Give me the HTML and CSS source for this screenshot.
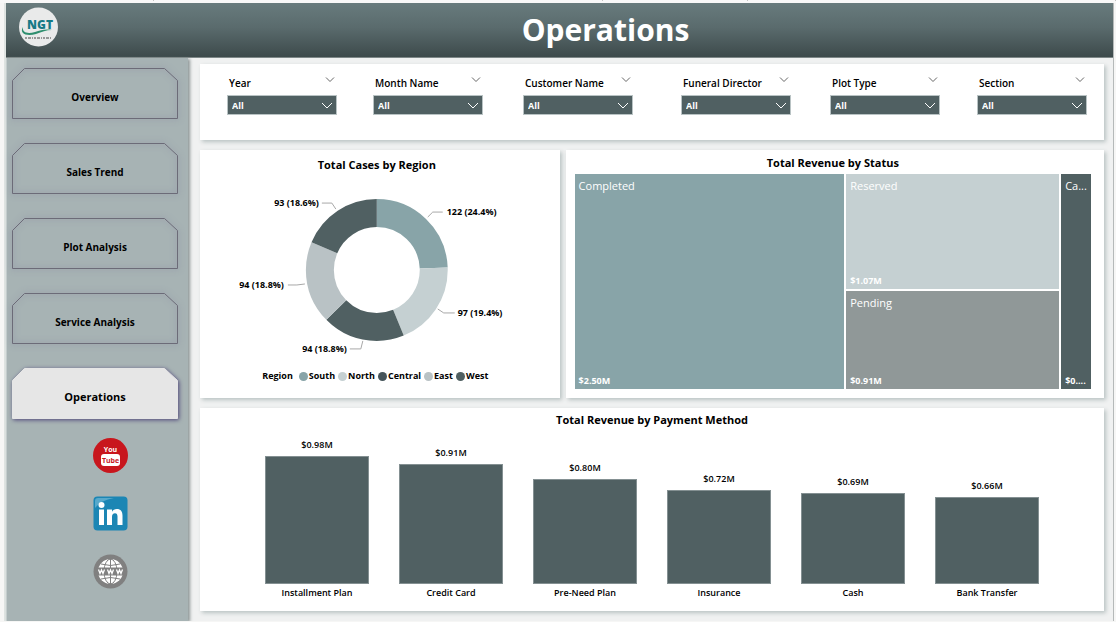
FILE: index.html
```html
<!DOCTYPE html>
<html lang="en">
<head>
    <meta charset="UTF-8">
    <meta name="viewport" content="width=device-width, initial-scale=1.0">
    <title>Operations</title>
    <link rel="stylesheet" href="styles.css">
</head>
<body>
<div class="top-strip"><span></span><span></span><span></span><span></span></div>
<div class="report">
    <header class="header">
        <svg class="logo" viewBox="0 0 40 40" role="img" aria-label="NGT">
            <circle cx="20.500" cy="20" r="19.500" fill="#e9eaea"/>
            <path d="M5 20c-4 6 3 10 13 7 6-2 10-4 16-4-7-1-11 0-17 2-7 2-13 1-12-5z" fill="#2f8f6f"/>
            <text class="logo-name" x="22" y="22">NGT</text>
            <path d="M7 31h27" stroke="#444" stroke-width="1" stroke-dasharray="2 1 3 1 1 1"/>
        </svg>
        <h1>Operations</h1>
    </header>

    <div class="body">
        <aside class="sidebar">
            <nav class="nav">
                <a href="#"><svg viewBox="0 0 166 52"><path d="M.5 12.500 12.500.5h140l13 12v38H.5z"/></svg><span>Overview</span></a>
                <a href="#"><svg viewBox="0 0 166 52"><path d="M.5 12.500 12.500.5h140l13 12v38H.5z"/></svg><span>Sales Trend</span></a>
                <a href="#"><svg viewBox="0 0 166 52"><path d="M.5 12.500 12.500.5h140l13 12v38H.5z"/></svg><span>Plot Analysis</span></a>
                <a href="#"><svg viewBox="0 0 166 52"><path d="M.5 12.500 12.500.5h140l13 12v38H.5z"/></svg><span>Service Analysis</span></a>
                <a href="#" class="active"><svg viewBox="0 0 166 52"><path d="M.5 12.500 12.500.5h140l13 12v38H.5z"/></svg><span>Operations</span></a>
            </nav>
            <div class="social">
                <a href="#" aria-label="YouTube">
                    <svg viewBox="0 0 35 35">
                        <circle cx="17.500" cy="17.500" r="17.500" fill="#c8161d"/>
                        <rect x="8" y="16" width="19" height="12" rx="3" fill="#fff"/>
                        <text class="yt" x="17.500" y="14" fill="#fff">You</text>
                        <text class="yt" x="17.500" y="25" fill="#c8161d">Tube</text>
                    </svg>
                </a>
                <a href="#" aria-label="LinkedIn">
                    <svg viewBox="0 0 35 35">
                        <rect x=".5" y=".5" width="34" height="34" rx="4" fill="#1c86b4"/>
                        <path d="M2 12V5q0-3 3-3h16Q8 4 2 12z" fill="#58a9cb"/>
                        <circle cx="8.500" cy="9" r="3" fill="#fff"/>
                        <path d="M6 13.500h5V29H6zM14 13.500h5v2.200c1-1.700 2.600-2.600 4.800-2.600 4 0 5.700 2.500 5.700 6.500V29h-5v-8.400c0-2.200-.8-3.400-2.500-3.400-2 0-3 1.400-3 3.600V29h-5z" fill="#fff"/>
                    </svg>
                </a>
                <a href="#" aria-label="Website">
                    <svg viewBox="0 0 35 35">
                        <circle cx="17.500" cy="17.500" r="17" fill="#808080"/>
                        <circle cx="17.500" cy="17.500" r="12.500" fill="#fff"/>
                        <g fill="none" stroke="#808080" stroke-width="1">
                            <ellipse cx="17.500" cy="17.500" rx="6.500" ry="12.500"/>
                            <path d="M17.500 5v25M8 10q9.500 3 19 0M8 25q9.500-3 19 0"/>
                        </g>
                        <path d="M4 13.500h27v8H4z" fill="#808080"/>
                        <path d="M5.500 15.500l1.500 4 1.500-3.500 1.500 3.500 1.500-4M14.500 15.500l1.500 4 1.500-3.500 1.500 3.500 1.500-4M23.500 15.500l1.500 4 1.500-3.500 1.500 3.500 1.500-4" fill="none" stroke="#fff" stroke-width="1.300"/>
                    </svg>
                </a>
            </div>
        </aside>

        <main class="main">
            <section class="card filters">
                <div class="filter">
                    <label for="year">Year</label>
                    <button type="button" aria-label="Year options"><svg viewBox="0 0 10 6"><path d="M1 .5l4 4 4-4"/></svg></button>
                    <div class="drop"><select id="year"><option>All</option></select><svg viewBox="0 0 12 8"><path d="M1 1l5 5 5-5"/></svg></div>
                </div>
                <div class="filter">
                    <label for="month">Month Name</label>
                    <button type="button" aria-label="Month options"><svg viewBox="0 0 10 6"><path d="M1 .5l4 4 4-4"/></svg></button>
                    <div class="drop"><select id="month"><option>All</option></select><svg viewBox="0 0 12 8"><path d="M1 1l5 5 5-5"/></svg></div>
                </div>
                <div class="filter">
                    <label for="customer">Customer Name</label>
                    <button type="button" aria-label="Customer options"><svg viewBox="0 0 10 6"><path d="M1 .5l4 4 4-4"/></svg></button>
                    <div class="drop"><select id="customer"><option>All</option></select><svg viewBox="0 0 12 8"><path d="M1 1l5 5 5-5"/></svg></div>
                </div>
                <div class="filter">
                    <label for="director">Funeral Director</label>
                    <button type="button" aria-label="Director options"><svg viewBox="0 0 10 6"><path d="M1 .5l4 4 4-4"/></svg></button>
                    <div class="drop"><select id="director"><option>All</option></select><svg viewBox="0 0 12 8"><path d="M1 1l5 5 5-5"/></svg></div>
                </div>
                <div class="filter">
                    <label for="plot">Plot Type</label>
                    <button type="button" aria-label="Plot options"><svg viewBox="0 0 10 6"><path d="M1 .5l4 4 4-4"/></svg></button>
                    <div class="drop"><select id="plot"><option>All</option></select><svg viewBox="0 0 12 8"><path d="M1 1l5 5 5-5"/></svg></div>
                </div>
                <div class="filter">
                    <label for="section">Section</label>
                    <button type="button" aria-label="Section options"><svg viewBox="0 0 10 6"><path d="M1 .5l4 4 4-4"/></svg></button>
                    <div class="drop"><select id="section"><option>All</option></select><svg viewBox="0 0 12 8"><path d="M1 1l5 5 5-5"/></svg></div>
                </div>
            </section>

            <div class="row">
                <section class="card region">
                    <h2>Total Cases by Region</h2>
                    <svg class="donut" viewBox="0 0 360 186">
                        <g class="slices" transform="rotate(-90 177 95)">
                            <circle cx="177" cy="95" r="57" pathLength="100" stroke="#88a4a8" stroke-dasharray="24.4 75.6"/>
                            <circle cx="177" cy="95" r="57" pathLength="100" stroke="#c5d0d2" stroke-dasharray="19.4 80.6" stroke-dashoffset="-24.4"/>
                            <circle cx="177" cy="95" r="57" pathLength="100" stroke="#506062" stroke-dasharray="18.8 81.2" stroke-dashoffset="-43.8"/>
                            <circle cx="177" cy="95" r="57" pathLength="100" stroke="#b9c2c5" stroke-dasharray="18.8 81.2" stroke-dashoffset="-62.6"/>
                            <circle cx="177" cy="95" r="57" pathLength="100" stroke="#506062" stroke-dasharray="18.6 81.4" stroke-dashoffset="-81.4"/>
                        </g>
                        <path class="leads" d="M228 42l5-5h10M238 134l6 4h11M163 166l-2 8h-11M105 109l-8 1H88M136 34l-4-6h-10"/>
                        <text x="247" y="40">122 (24.4%)</text>
                        <text x="258" y="141">97 (19.4%)</text>
                        <text x="147" y="177" class="end">94 (18.8%)</text>
                        <text x="84" y="113" class="end">94 (18.8%)</text>
                        <text x="119" y="31" class="end">93 (18.6%)</text>
                    </svg>
                    <ul class="legend">
                        <li class="legend-title">Region</li>
                        <li><i class="south"></i>South</li>
                        <li><i class="north"></i>North</li>
                        <li><i class="central"></i>Central</li>
                        <li><i class="east"></i>East</li>
                        <li><i class="west"></i>West</li>
                    </ul>
                </section>

                <section class="card status">
                    <h2>Total Revenue by Status</h2>
                    <div class="treemap">
                        <div class="tile completed"><span>Completed</span><b>$2.50M</b></div>
                        <div class="tile reserved"><span>Reserved</span><b>$1.07M</b></div>
                        <div class="tile pending"><span>Pending</span><b>$0.91M</b></div>
                        <div class="tile cancelled"><span>Ca...</span><b>$0....</b></div>
                    </div>
                </section>
            </div>

            <section class="card payment">
                <h2>Total Revenue by Payment Method</h2>
                <div class="bars">
                    <div class="bar-col"><b>$0.98M</b><div class="bar" style="height: 128px"></div><span>Installment Plan</span></div>
                    <div class="bar-col"><b>$0.91M</b><div class="bar" style="height: 120px"></div><span>Credit Card</span></div>
                    <div class="bar-col"><b>$0.80M</b><div class="bar" style="height: 105px"></div><span>Pre-Need Plan</span></div>
                    <div class="bar-col"><b>$0.72M</b><div class="bar" style="height: 94px"></div><span>Insurance</span></div>
                    <div class="bar-col"><b>$0.69M</b><div class="bar" style="height: 91px"></div><span>Cash</span></div>
                    <div class="bar-col"><b>$0.66M</b><div class="bar" style="height: 87px"></div><span>Bank Transfer</span></div>
                </div>
            </section>
        </main>
    </div>
</div>
</body>
</html>
```
FILE: styles.css
```css
*{
    box-sizing: border-box;
}
body{
    margin: 0;
    background-color: #f6f6f5;
    font-family: "Open Sans", "Noto Sans", sans-serif;
    font-size: 9px;
    line-height: 12px;
    color: #000;
}
h1, h2, ul{
    margin: 0;
    padding: 0;
}
a{
    color: inherit;
    text-decoration: none;
}
svg{
    display: block;
}

.top-strip{
    display: grid;
    grid-template-columns: 154fr 449fr 145fr 368fr;
    height: 3px;
    background-color: #f8f8f8;
}
.top-strip span{
    border-right: 1px solid #c4c4c4;
    height: 1px;
}
.report{
    margin: 0 2px 0 4px;
    border-left: 2px solid #dfe4e2;
    border-right: 1px solid #b5b9b9;
    background-color: #f0f1f1;
}

.header{
    display: flex;
    align-items: center;
    gap: 40px;
    height: 55px;
    padding-left: 12px;
    background: linear-gradient(#687b7d, #5a6b6d 45%, #3d4a4b);
    border-bottom: 1px solid #7e8888;
}
.logo{
    width: 40px;
    height: 40px;
    margin-bottom: 6px;
}
.logo-name{
    font-size: 12px;
    font-weight: 800;
    fill: #167a86;
    text-anchor: middle;
}
.header h1{
    flex: 1;
    text-align: center;
    font-size: 30px;
    line-height: 40px;
    font-weight: 700;
    color: #fff;
}

.body{
    display: flex;
}
.sidebar{
    width: 182px;
    padding: 10px 5px 31px;
    background-color: #a7b3b4;
    border-left: 1px solid #c3cccc;
    box-shadow: 2px 1px 3px #8d9696;
}
.nav{
    display: grid;
    gap: 23px;
}
.nav a{
    position: relative;
    display: flex;
    justify-content: center;
    width: 166px;
    height: 52px;
    padding-top: 22px;
    font-size: 10px;
    line-height: 14px;
    font-weight: 700;
}
.nav svg{
    position: absolute;
    inset: 0;
    overflow: visible;
    fill: none;
    stroke: #6c6b78;
    filter: drop-shadow(0 0 3px #7d7898);
}
.nav span{
    position: relative;
}
.nav .active{
    font-size: 11px;
}
.nav .active svg{
    fill: #e6e6e6;
    stroke: #e6e6e6;
    filter: drop-shadow(1px 1px 2px #4d4377);
}
.social{
    display: grid;
    gap: 23px;
    margin-top: 18px;
    padding-left: 81px;
}
.social a{
    width: 35px;
    height: 35px;
}
.yt{
    font-size: 7px;
    font-weight: 700;
    text-anchor: middle;
}

.main{
    flex: 1;
    min-width: 0;
    display: grid;
    gap: 10px;
    align-content: start;
    padding: 6px 9px 10px 12px;
}
.card{
    background-color: #fff;
    box-shadow: 2px 2px 4px #b9c3c3;
}
.card h2{
    text-align: center;
    font-size: 11px;
    line-height: 16px;
    font-weight: 700;
}

.filters{
    display: grid;
    grid-template-columns: 146fr 150fr 158fr 149fr 147fr 110px;
    padding: 11px 17px 25px 27px;
}
.filter{
    display: grid;
    grid-template-columns: 1fr 12px;
    width: 110px;
    row-gap: 4px;
}
.filter label{
    padding-left: 2px;
    font-size: 10px;
    line-height: 16px;
    font-weight: 600;
    white-space: nowrap;
}
.filter button{
    height: 10px;
    padding: 0;
    border: 0;
    background: none;
}
.filter button svg{
    width: 10px;
    height: 6px;
    fill: none;
    stroke: #666;
}
.drop{
    grid-column: 1 / 3;
    position: relative;
}
.drop select{
    appearance: none;
    display: block;
    width: 100%;
    height: 20px;
    padding: 0 4px;
    border: 1px solid #b9c3c4;
    border-radius: 0;
    background-color: #506062;
    color: #fff;
    font-family: inherit;
    font-size: 9px;
    font-weight: 700;
}
.drop svg{
    position: absolute;
    right: 4px;
    top: 7px;
    width: 12px;
    height: 8px;
    fill: none;
    stroke: #fff;
    pointer-events: none;
}

.row{
    display: grid;
    grid-template-columns: 360fr 539fr;
    gap: 6px;
}
.region{
    padding: 7px 0 16px;
}
.region h2{
    padding-right: 6px;
}
.donut{
    width: 100%;
    height: 186px;
    margin-top: 2px;
    font-size: 9px;
    font-weight: 700;
    fill: #000;
}
.slices{
    fill: none;
    stroke-width: 28;
}
.leads{
    fill: none;
    stroke: #a8a8a8;
}
.end{
    text-anchor: end;
}
.legend{
    display: flex;
    justify-content: center;
    gap: 3px;
    margin-top: 9px;
    padding-right: 9px;
    list-style: none;
    font-weight: 700;
}
.legend li{
    display: flex;
    align-items: center;
    gap: 1px;
}
.legend .legend-title{
    margin-right: 3px;
}
.legend i{
    width: 9px;
    height: 9px;
    border-radius: 50%;
}
.south{ background-color: #88a4a8; }
.north{ background-color: #c5d0d2; }
.central{ background-color: #45545a; }
.east{ background-color: #b9c2c5; }
.west{ background-color: #506062; }

.status{
    display: flex;
    flex-direction: column;
    padding: 5px 13px 9px 9px;
}
.treemap{
    flex: 1;
    display: grid;
    grid-template-columns: 271fr 214fr 30fr;
    grid-template-rows: 115fr 98fr;
    gap: 2px;
    margin-top: 3px;
}
.tile{
    display: flex;
    flex-direction: column;
    justify-content: space-between;
    padding: 4px 0 2px 4px;
    color: #fff;
    font-size: 11px;
    line-height: 16px;
    overflow: hidden;
}
.tile b{
    font-size: 9px;
    line-height: 12px;
}
.completed{
    grid-row: 1 / 3;
    background-color: #88a4a8;
}
.reserved{
    background-color: #c5d0d2;
}
.pending{
    grid-column: 2;
    background-color: #909898;
}
.cancelled{
    grid-column: 3;
    grid-row: 1 / 3;
    background-color: #506062;
}

.payment{
    padding: 4px 50px 12px;
}
.bars{
    display: grid;
    grid-template-columns: repeat(6, 1fr);
    align-items: end;
    margin-top: 11px;
}
.bar-col{
    display: flex;
    flex-direction: column;
    align-items: center;
    font-weight: 600;
}
.bar-col b{
    font-weight: 600;
    margin-bottom: 5px;
}
.bar{
    width: 78%;
    background-color: #506062;
    border: 1px solid #849092;
}
.bar-col span{
    margin-top: 3px;
}
```
